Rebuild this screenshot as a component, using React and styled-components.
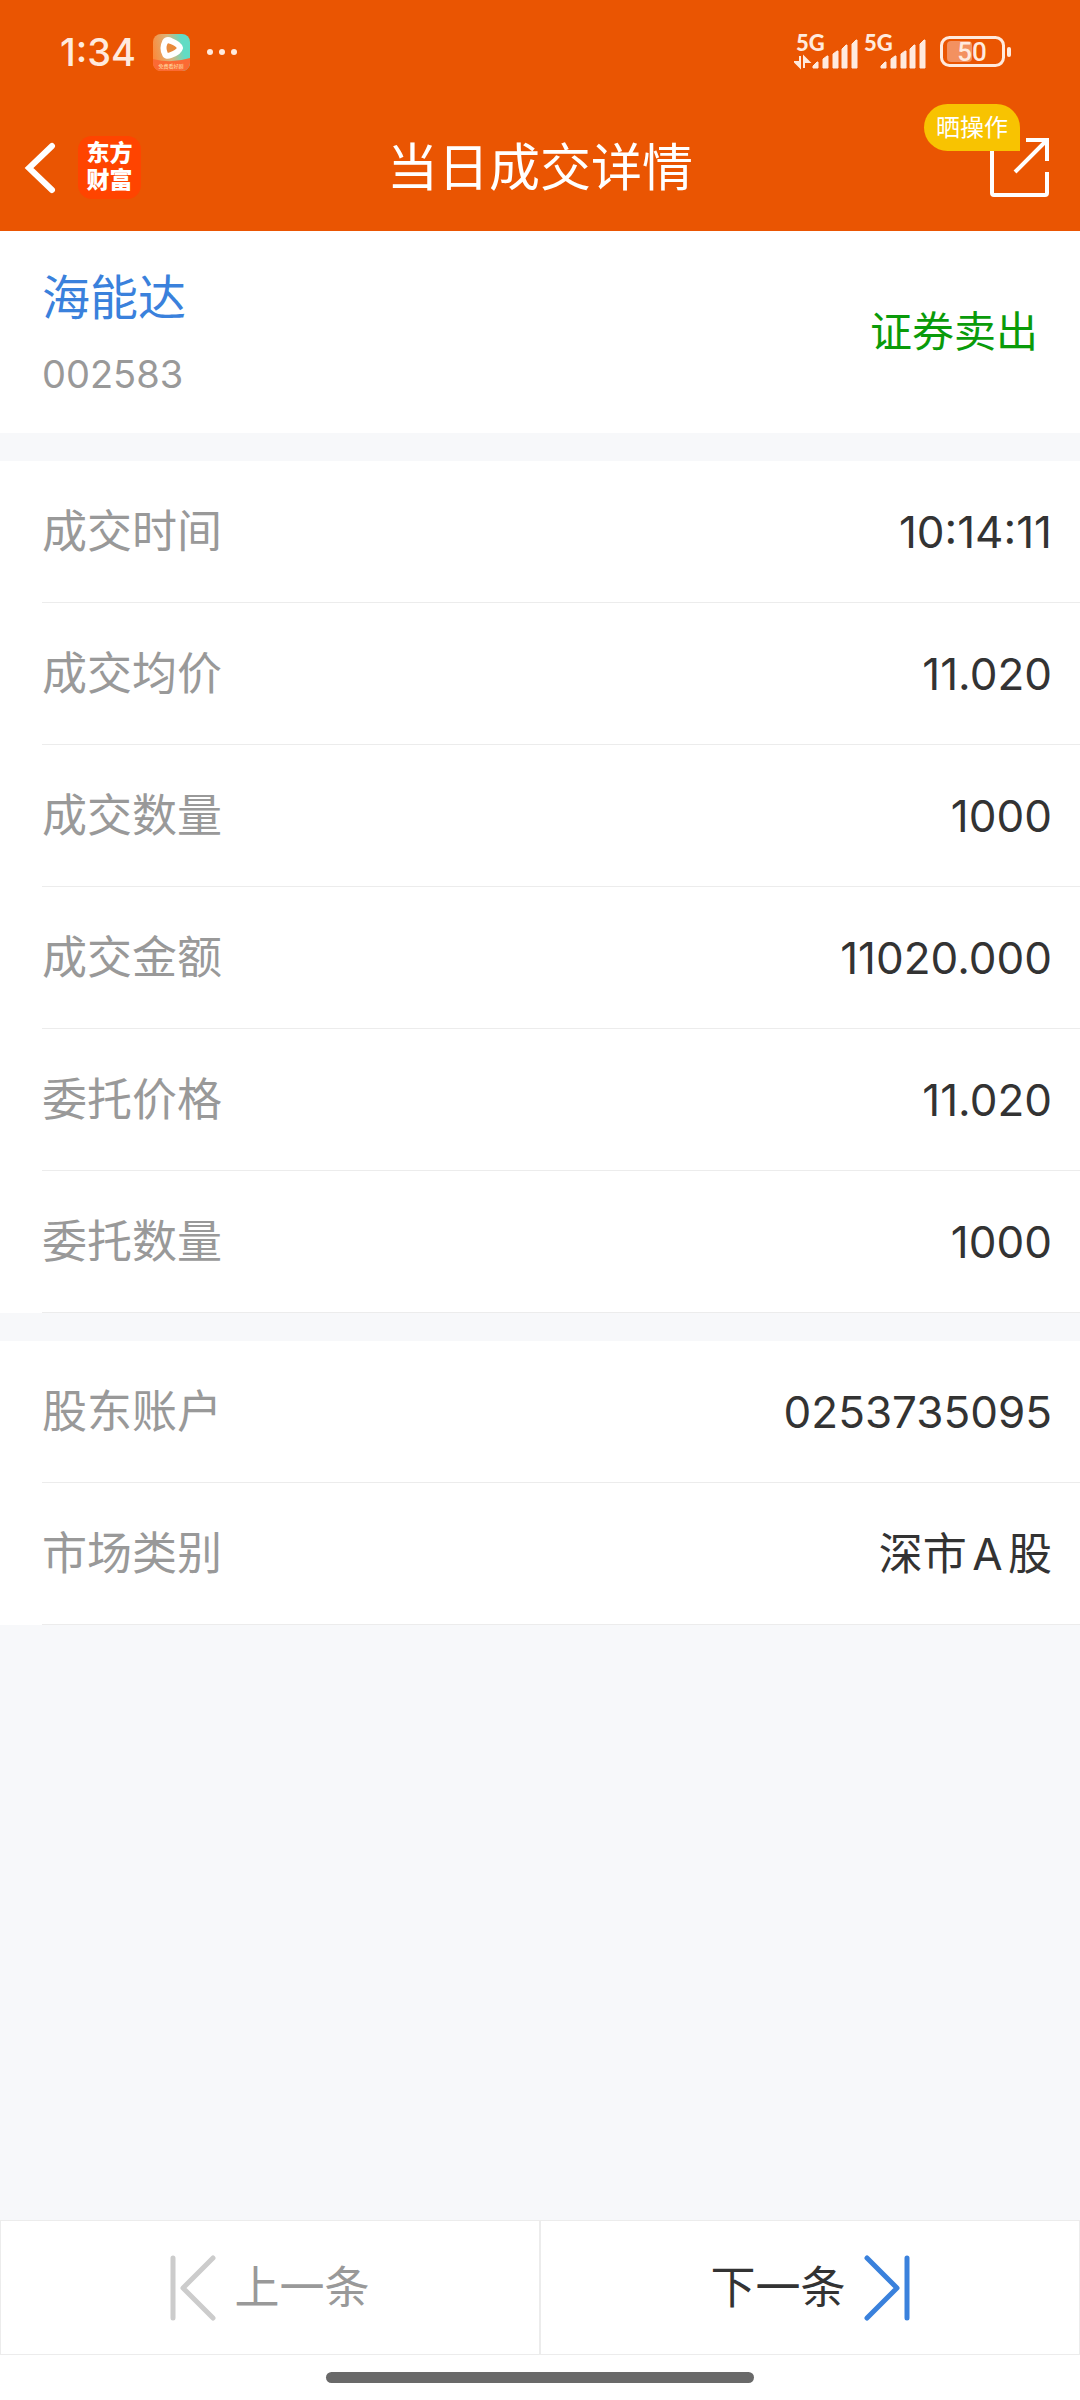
import React from 'react';
import styled, { createGlobalStyle } from 'styled-components';

const colors = {
  brand: '#ea5502',
  logo: '#ff4400',
  badge: '#f8c301',
  blue: '#3a81dc',
  green: '#0a9b0a',
  text: '#333333',
  muted: '#999999',
  disabled: '#cccccc',
  line: '#ececec',
  page: '#f7f8fa',
  status: '#ffeade',
};

const tradeRows = [
  { label: '成交时间', value: '10:14:11' },
  { label: '成交均价', value: '11.020' },
  { label: '成交数量', value: '1000' },
  { label: '成交金额', value: '11020.000' },
  { label: '委托价格', value: '11.020' },
  { label: '委托数量', value: '1000' },
];

const accountRows = [
  { label: '股东账户', value: '0253735095' },
  { label: '市场类别', value: '深市A股' },
];

const VideoAppIcon = () => (
  <svg width="37" height="37" viewBox="0 0 37 37" aria-hidden="true">
    <defs>
      <linearGradient id="videoBg" x1="0" y1="0.5" x2="1" y2="0.3">
        <stop offset="0" stopColor="#fb8a3c" />
        <stop offset="0.45" stopColor="#d9b57c" />
        <stop offset="0.8" stopColor="#62dcc4" />
      </linearGradient>
      <clipPath id="videoClip">
        <rect width="37" height="37" rx="8" />
      </clipPath>
    </defs>
    <g clipPath="url(#videoClip)">
      <rect width="37" height="37" fill="url(#videoBg)" />
      <path d="M0 25 Q18 30 37 24 V37 H0 Z" fill="#fb6a34" />
      <path
        d="M12 8 Q14 5 18 7 Q26 10 27 14 Q26 18 18 21 Q13 23 12 20 Q9 14 12 8 Z"
        fill="#e88a3c"
        stroke="#fff"
        strokeWidth="6"
        strokeLinejoin="round"
      />
      <text
        x="18"
        y="34"
        fontSize="5"
        textAnchor="middle"
        fill="#ffe2b0"
        fontFamily="'Noto Sans CJK SC', sans-serif"
      >
        免费看好剧
      </text>
    </g>
  </svg>
);

const SignalIcon = ({ data }) => (
  <svg width="64" height="52" viewBox="0 -8 64 52" aria-hidden="true">
    <text
      x="2"
      y="17"
      fontSize="22"
      fontWeight="900"
      fill={colors.status}
      fontFamily="Lato, sans-serif"
    >
      5G
    </text>
    {data && (
      <path
        d="M6 22 V33 L1 28 H6 M10 34 V23 L15 28 H10"
        fill={colors.status}
        stroke={colors.status}
        strokeWidth="2"
      />
    )}
    <g
      fill={colors.status}
      stroke={colors.status}
      strokeWidth="1"
      strokeLinejoin="round"
    >
      <path d="M19 32 L23 28 H24 V34 H19 Z" />
      <path d="M29 25 L33 22 H34 V34 H29 Z" />
      <path d="M39 20 L43 17 H44 V34 H39 Z" />
      <path d="M48 15 L52 11 H53 V34 H48 Z" />
      <path d="M58 10 L62 6 H63 V34 H58 Z" />
    </g>
  </svg>
);

const BatteryIcon = () => (
  <svg width="71" height="32" viewBox="0 0 71 32" aria-label="50%">
    <rect
      x="1.500"
      y="1.500"
      width="62"
      height="28"
      rx="8"
      fill="none"
      stroke={colors.status}
      strokeWidth="3"
    />
    <rect x="7" y="5" width="25" height="21" rx="4" fill="#f39160" />
    <rect x="67" y="11" width="4" height="10" rx="2" fill={colors.status} />
    <text
      x="32"
      y="25"
      fontSize="26"
      fontWeight="500"
      textAnchor="middle"
      fill={colors.status}
      fontFamily="Roboto, sans-serif"
    >
      50
    </text>
  </svg>
);

const BackIcon = () => (
  <svg width="32" height="52" viewBox="0 0 32 52" aria-hidden="true">
    <path
      d="M28 4 L5 26 L28 48"
      fill="none"
      stroke="#fff"
      strokeWidth="6"
      strokeLinecap="round"
    />
  </svg>
);

const ShareIcon = () => (
  <svg width="60" height="60" viewBox="0 0 60 60" aria-hidden="true">
    <g fill="none" stroke="#fff" strokeWidth="4">
      <path d="M2 8 V55 Q2 57 4 57 H55 Q57 57 57 55 V34" />
      <path d="M36 2 H57 V23 M57 2 L25 34" />
    </g>
  </svg>
);

const StepIcon = ({ next }) => (
  <svg width="46" height="66" viewBox="0 0 46 66" aria-hidden="true">
    <path
      d={next ? 'M3 3 L33 33 L3 63 M43 3 V63' : 'M43 3 L13 33 L43 63 M3 3 V63'}
      fill="none"
      stroke={next ? colors.blue : colors.disabled}
      strokeWidth="5"
      strokeLinecap="round"
      strokeLinejoin="round"
    />
  </svg>
);

const RowList = ({ rows }) => (
  <List>
    {rows.map((row) => (
      <Row key={row.label}>
        <Label>{row.label}</Label>
        <Value>{row.value}</Value>
      </Row>
    ))}
  </List>
);

const App = () => {
  return (
    <>
      <GlobalStyle />
      <Page>
        <Header>
          <StatusBar>
            <StatusGroup>
              <Clock>1:34</Clock>
              <VideoAppIcon />
              <Dots>
                <i />
                <i />
                <i />
              </Dots>
            </StatusGroup>
            <StatusIcons>
              <SignalIcon data />
              <SignalIcon />
              <Battery>
                <BatteryIcon />
              </Battery>
            </StatusIcons>
          </StatusBar>

          <NavBar>
            <NavSide>
              <IconButton type="button" aria-label="返回">
                <BackIcon />
              </IconButton>
              <Logo>
                <span>东方</span>
                <span>财富</span>
              </Logo>
            </NavSide>
            <Title>当日成交详情</Title>
            <NavSide className="right">
              <ShareButton type="button" aria-label="分享">
                <ShareIcon />
                <Badge>晒操作</Badge>
              </ShareButton>
            </NavSide>
          </NavBar>
        </Header>

        <Stock>
          <div>
            <StockName href="#stock">海能达</StockName>
            <StockCode>002583</StockCode>
          </div>
          <Side>证券卖出</Side>
        </Stock>

        <Content>
          <RowList rows={tradeRows} />
          <RowList rows={accountRows} />
        </Content>

        <Footer>
          <Stepper>
            <StepButton type="button" disabled>
              <StepIcon />
              上一条
            </StepButton>
            <StepButton type="button">
              下一条
              <StepIcon next />
            </StepButton>
          </Stepper>
          <HomeBar />
        </Footer>
      </Page>
    </>
  );
};

// styled components
const GlobalStyle = createGlobalStyle`
  * {
    box-sizing: border-box;
  }

  body {
    margin: 0;
    background: ${colors.page};
    color: ${colors.text};
    font-family: Inter, 'Noto Sans CJK SC', sans-serif;
  }

  svg {
    display: block;
    flex: none;
  }

  button {
    border: 0;
    padding: 0;
    background: none;
    font: inherit;
  }
`;

const Page = styled.div`
  display: flex;
  flex-direction: column;
  min-height: 100vh;
`;

const Header = styled.header`
  background: ${colors.brand};
  color: #fff;
`;

const StatusBar = styled.div`
  display: flex;
  align-items: center;
  justify-content: space-between;
  height: 104px;
  padding: 0 69px 0 60px;
`;

const StatusGroup = styled.div`
  display: flex;
  align-items: center;
  gap: 17px;
`;

const Clock = styled.span`
  color: ${colors.status};
  font-size: 38px;
  font-weight: 500;
  line-height: 48px;
`;

const Dots = styled.span`
  display: flex;
  gap: 6px;

  i {
    width: 6px;
    height: 6px;
    border-radius: 50%;
    background: ${colors.status};
  }
`;

const StatusIcons = styled.div`
  display: flex;
  align-items: center;
  gap: 4px;
`;

const Battery = styled.div`
  margin-left: 10px;
`;

const NavBar = styled.div`
  display: grid;
  grid-template-columns: 1fr auto 1fr;
  align-items: center;
  height: 127px;
`;

const NavSide = styled.div`
  display: flex;
  align-items: center;
  gap: 22px;
  padding-left: 24px;

  &.right {
    justify-content: flex-end;
    padding: 0 30px 0 0;
  }
`;

const IconButton = styled.button`
  color: #fff;
`;

const Logo = styled.div`
  display: flex;
  flex-direction: column;
  align-items: center;
  width: 63px;
  height: 63px;
  padding-top: 2px;
  border-radius: 14px;
  background: ${colors.logo};
  font-family: 'Noto Sans CJK SC', sans-serif;
  font-size: 23px;
  font-weight: 900;
  line-height: 27px;
`;

const Title = styled.h1`
  margin: 0;
  font-size: 51px;
  font-weight: 400;
  line-height: 60px;
`;

const ShareButton = styled.button`
  position: relative;
`;

const Badge = styled.span`
  position: absolute;
  right: 30px;
  bottom: 47px;
  padding: 0 12px;
  border-radius: 24px 24px 0 24px;
  background: ${colors.badge};
  color: #fff;
  font-size: 24px;
  line-height: 47px;
  white-space: nowrap;
`;

const Stock = styled.section`
  display: flex;
  align-items: center;
  justify-content: space-between;
  height: 202px;
  padding: 0 42px;
  background: #fff;
`;

const StockName = styled.a`
  display: block;
  padding-top: 12px;
  color: ${colors.blue};
  font-size: 48px;
  line-height: 72px;
  text-decoration: none;
`;

const StockCode = styled.div`
  color: ${colors.muted};
  font-size: 38px;
  line-height: 80px;
`;

const Side = styled.span`
  color: ${colors.green};
  font-size: 42px;
  line-height: 60px;
`;

const Content = styled.main`
  flex: 1;
  display: flex;
  flex-direction: column;
  gap: 28px;
  padding: 28px 0;
`;

const List = styled.dl`
  margin: 0;
  padding-left: 42px;
  background: #fff;
`;

const Row = styled.div`
  display: flex;
  align-items: center;
  justify-content: space-between;
  height: 142px;
  padding-right: 28px;
  border-bottom: 1px solid ${colors.line};
`;

const Label = styled.dt`
  color: ${colors.muted};
  font-size: 45px;
  line-height: 60px;
`;

const Value = styled.dd`
  margin: 0;
  font-size: 44px;
  line-height: 60px;
  text-autospace: normal;
`;

const Footer = styled.footer`
  background: #fff;
`;

const Stepper = styled.nav`
  display: grid;
  grid-template-columns: 1fr 1fr;
`;

const StepButton = styled.button`
  display: flex;
  align-items: center;
  justify-content: center;
  gap: 18px;
  height: 135px;
  border: 1px solid ${colors.line};
  color: ${colors.text};
  font-size: 45px;
  line-height: 60px;

  &:disabled {
    color: ${colors.muted};
  }
`;

const HomeBar = styled.div`
  width: 428px;
  max-width: 40%;
  height: 11px;
  margin: 17px auto;
  border-radius: 6px;
  background: #696969;
`;

export default App;
